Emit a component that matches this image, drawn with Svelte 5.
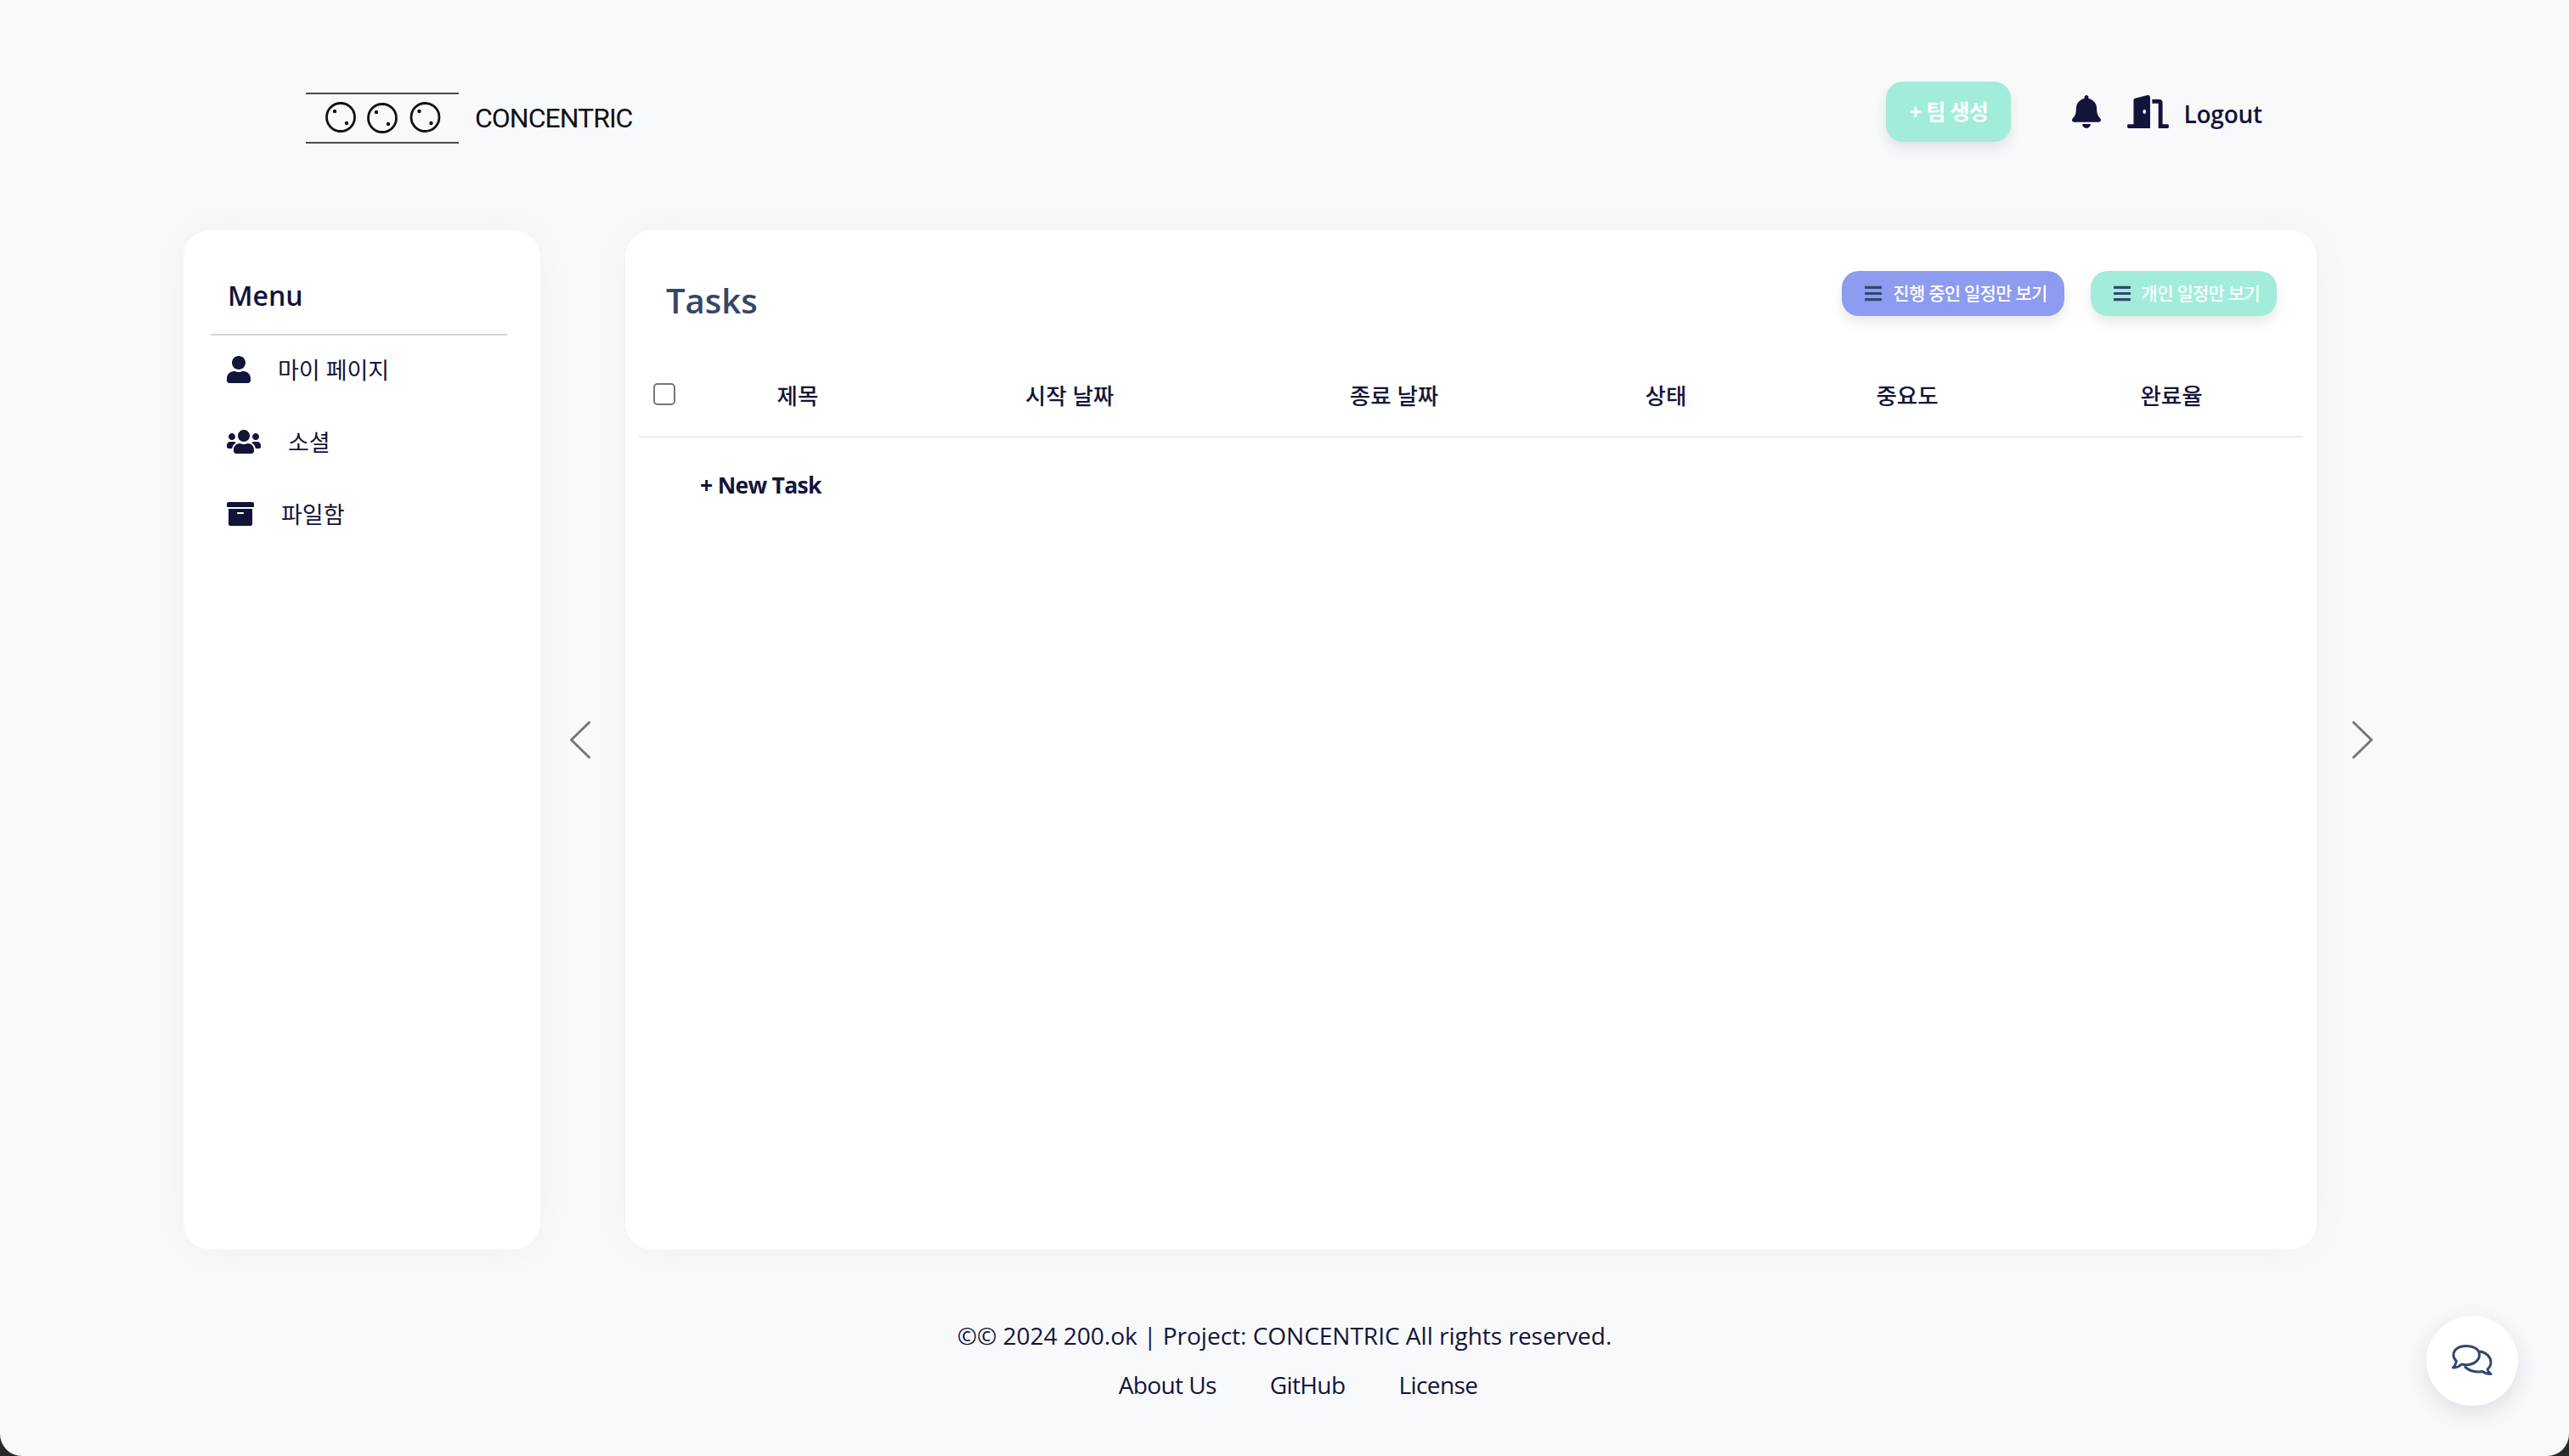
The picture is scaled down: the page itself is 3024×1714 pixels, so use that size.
<script>
  const menu = [
    { label: '마이 페이지', vb: '0 0 448 512', w: 28, d: 'M224 256c70.7 0 128-57.3 128-128S294.7 0 224 0 96 57.3 96 128s57.3 128 128 128zm89.6 32h-16.7c-22.2 10.2-46.9 16-72.9 16s-50.6-5.8-72.9-16h-16.7C60.2 288 0 348.2 0 422.4V464c0 26.5 21.5 48 48 48h352c26.5 0 48-21.5 48-48v-41.6c0-74.2-60.2-134.4-134.4-134.4z' },
    { label: '소셜', vb: '0 0 640 512', w: 40, d: 'M96 224c35.3 0 64-28.7 64-64s-28.7-64-64-64-64 28.7-64 64 28.7 64 64 64zm448 0c35.3 0 64-28.7 64-64s-28.7-64-64-64-64 28.7-64 64 28.7 64 64 64zm32 32h-64c-17.6 0-33.5 7.1-45.1 18.6 40.3 22.1 68.9 62 75.1 109.4h66c17.7 0 32-14.3 32-32v-32c0-35.3-28.7-64-64-64zm-256 0c61.9 0 112-50.1 112-112S381.9 32 320 32 208 82.1 208 144s50.1 112 112 112zm76.8 32h-8.3c-20.8 10-43.9 16-68.5 16s-47.6-6-68.5-16h-8.3C179.6 288 128 339.6 128 403.2V432c0 26.5 21.5 48 48 48h288c26.5 0 48-21.5 48-48v-28.8c0-63.6-51.6-115.2-115.2-115.2zm-223.7-13.4C161.5 263.1 145.6 256 128 256H64c-35.3 0-64 28.7-64 64v32c0 17.7 14.3 32 32 32h65.9c6.3-47.4 34.9-87.3 75.2-109.4z' },
    { label: '파일함', vb: '0 0 512 512', w: 32, d: 'M32 448c0 17.7 14.3 32 32 32h384c17.7 0 32-14.3 32-32V160H32v288zm160-212c0-6.6 5.4-12 12-12h104c6.6 0 12 5.4 12 12v8c0 6.6-5.4 12-12 12H204c-6.6 0-12-5.4-12-12v-8zM480 32H32C14.3 32 0 46.3 0 64v48c0 8.8 7.2 16 16 16h480c8.8 0 16-7.2 16-16V64c0-17.7-14.3-32-32-32z' }
  ];
  const bars = 'M16 132h416c8.837 0 16-7.163 16-16V76c0-8.837-7.163-16-16-16H16C7.163 60 0 67.163 0 76v40c0 8.837 7.163 16 16 16zm0 160h416c8.837 0 16-7.163 16-16v-40c0-8.837-7.163-16-16-16H16c-8.837 0-16 7.163-16 16v40c0 8.837 7.163 16 16 16zm0 160h416c8.837 0 16-7.163 16-16v-40c0-8.837-7.163-16-16-16H16c-8.837 0-16 7.163-16 16v40c0 8.837 7.163 16 16 16z';
  const cols = ['제목', '시작 날짜', '종료 날짜', '상태', '중요도', '완료율'];
  const circles = [
    { cx: 41, cy: 29, dx: 7 },
    { cx: 90, cy: 30, dx: 7 },
    { cx: 140.5, cy: 29, dx: 7 }
  ];
</script>

<div class="page">
  <header class="top">
    <div class="logo">
      <svg class="mark" width="180" height="60" viewBox="0 0 180 60" aria-hidden="true">
        <path d="M0 1H180M0 59H180" stroke="#111" stroke-width="1.6" fill="none" />
        {#each circles as c}
          <circle cx={c.cx} cy={c.cy} r="16.5" fill="none" stroke="#111" stroke-width="2.8" />
          <circle cx={c.cx - c.dx} cy={c.cy - c.dx} r="2.2" fill="#111" />
          <circle cx={c.cx + c.dx} cy={c.cy + c.dx} r="2.2" fill="#111" />
        {/each}
      </svg>
      <span class="wordmark">CONCENTRIC</span>
    </div>
    <div class="actions">
      <button class="team"><span>+ 팀 생성</span></button>
      <svg class="bell" viewBox="0 0 448 512" aria-hidden="true"><path d="M224 512c35.32 0 63.97-28.65 63.97-64H160.03c0 35.35 28.65 64 63.97 64zm215.39-149.71c-19.32-20.76-55.47-51.99-55.47-154.29 0-77.7-54.48-139.9-127.94-155.16V32c0-17.67-14.32-32-31.98-32s-31.98 14.33-31.98 32v20.84C118.56 68.1 64.08 130.3 64.08 208c0 102.3-36.15 133.53-55.47 154.29-6 6.45-8.66 14.16-8.61 21.71.11 16.4 12.98 32 32.1 32h383.8c19.12 0 32-15.6 32.1-32 .05-7.55-2.61-15.27-8.61-21.71z" /></svg>
      <svg class="door" viewBox="0 0 640 512" aria-hidden="true"><path d="M624 448h-80V113.45C544 86.19 522.47 64 496 64H384v64h96v384h144c8.84 0 16-7.16 16-16v-32c0-8.84-7.16-16-16-16zM312.24 1.01l-192 49.74C105.99 54.44 96 67.7 96 82.92V448H16c-8.84 0-16 7.16-16 16v32c0 8.84 7.16 16 16 16h336V33.18c0-21.58-19.56-37.41-39.76-32.17zM264 288c-13.25 0-24-14.33-24-32s10.75-32 24-32 24 14.33 24 32-10.75 32-24 32z" /></svg>
      <span class="logout">Logout</span>
    </div>
  </header>

  <div class="body">
    <aside class="side card">
      <h2 class="menu-title">Menu</h2>
      <ul class="menu">
        {#each menu as m}
          <li>
            <svg viewBox={m.vb} width={m.w} height="32" aria-hidden="true"><path d={m.d} /></svg>
            <span>{m.label}</span>
          </li>
        {/each}
      </ul>
    </aside>

    <div class="arrow-col left">
      <svg width="24" height="44" viewBox="0 0 24 44" aria-hidden="true"><path d="M22.5 1.5 1.5 22l21 20.5" /></svg>
    </div>

    <main class="tasks card">
      <div class="tasks-head">
        <h1>Tasks</h1>
        <div class="filters">
          <button class="filter purple">
            <svg viewBox="0 0 448 512" aria-hidden="true"><path d={bars} /></svg>
            <span>진행 중인 일정만 보기</span>
          </button>
          <button class="filter mint">
            <svg viewBox="0 0 448 512" aria-hidden="true"><path d={bars} /></svg>
            <span>개인 일정만 보기</span>
          </button>
        </div>
      </div>
      <div class="thead">
        <div class="check"><input type="checkbox" /></div>
        {#each cols as c}
          <div class="th">{c}</div>
        {/each}
      </div>
      <div class="new-task">+ New Task</div>
    </main>

    <div class="arrow-col right">
      <svg width="24" height="44" viewBox="0 0 24 44" aria-hidden="true"><path d="M1.5 1.5 22.5 22l-21 20.5" /></svg>
    </div>
  </div>

  <footer class="foot">
    <p>©© 2024 200.ok | Project: CONCENTRIC All rights reserved.</p>
    <nav>
      <span>About Us</span>
      <span>GitHub</span>
      <span>License</span>
    </nav>
  </footer>

  <button class="chat" aria-label="chat">
    <svg width="48" height="38" viewBox="0 0 48 38" fill="none" stroke="#34476f" stroke-width="3" stroke-linejoin="round" stroke-linecap="round" aria-hidden="true">
      <path d="M33 8c7.5 1 13 6.5 13 12.500 0 3.500-1.800 6.500-4 8.500 .5 2 2 4 4 5.500-4 0-7-1-10-3-1.500 .3-3 .4-4.500 .4-6 0-12-2-15.500-5.500" />
      <path d="M17 1.500C8 1.500 2 6 2 12c0 3 1.500 5.500 3.500 7.500C5 22 3.500 25 1.500 27 5.500 27 9 25.500 11.500 23c1.500 .5 3.500 .7 5.500 .7 9 0 15.500-5.200 15.500-11.700S26 1.500 17 1.500Z" />
    </svg>
  </button>
</div>

<style>
  :global(body) {
    margin: 0;
    background: #26282c;
  }
  .page {
    position: relative;
    box-sizing: border-box;
    height: 1714px;
    width: 3024px;
    background: #f8f9fb;
    border-radius: 0 0 26px 26px;
    overflow: hidden;
    color: #12143a;
    font-family: "Open Sans", "Noto Sans CJK KR", sans-serif;
  }
  .top {
    box-sizing: border-box;
    height: 271px;
    padding: 0 361px 9px 360px;
    display: flex;
    justify-content: space-between;
    align-items: center;
  }
  .logo {
    display: flex;
    align-items: center;
    gap: 19px;
    margin-top: 16px;
  }
  .mark { display: block; }
  .wordmark {
    font-family: Roboto, sans-serif;
    font-size: 32px;
    font-weight: 400;
    letter-spacing: -1px;
    color: #111;
    line-height: 1;
  }
  .actions {
    display: flex;
    align-items: center;
  }
  .team {
    width: 147px;
    height: 71px;
    border: 0;
    border-radius: 20px;
    background: #a2ecdc;
    color: #fff;
    font-family: "Open Sans", "Noto Sans CJK KR", sans-serif;
    font-size: 25px;
    font-weight: 700;
    letter-spacing: -0.6px;
    box-shadow: 0 8px 14px rgba(30, 40, 60, 0.1);
    padding: 0;
    margin-right: 72px;
  }
  .team span { display: block; margin-top: -2px; }
  .bell { width: 34px; height: 39px; fill: #12143a; margin-right: 31px; }
  .door { width: 49px; height: 39px; fill: #12143a; margin-right: 17px; }
  .logout { font-size: 28px; font-weight: 600; letter-spacing: -0.2px; line-height: 40px; margin-top: 6px; }

  .body {
    display: flex;
    height: 1200px;
    padding-left: 216px;
  }
  .card {
    background: #fff;
    border-radius: 32px;
    box-shadow: 0 0 48px rgba(20, 30, 60, 0.04);
  }
  .side {
    box-sizing: border-box;
    width: 420px;
    padding: 55px 39px 0 32px;
  }
  .menu-title {
    margin: 0;
    padding: 0 0 23px 20px;
    font-size: 32px;
    line-height: 44px;
    font-weight: 600;
    border-bottom: 2px solid #d4d4d8;
  }
  .menu {
    list-style: none;
    margin: -3px 0 0;
    padding: 0 0 0 19px;
  }
  .menu li {
    height: 85px;
    display: flex;
    align-items: center;
    gap: 32px;
    font-size: 27px;
  }
  .menu li svg { fill: #12143a; flex: none; }
  .arrow-col {
    display: flex;
    align-items: center;
  }
  .arrow-col path { fill: none; stroke: #777; stroke-width: 3; stroke-linecap: round; stroke-linejoin: round; }
  .arrow-col.left { width: 100px; padding-left: 35px; box-sizing: border-box; }
  .arrow-col.right { padding-left: 42px; }
  .tasks {
    box-sizing: border-box;
    width: 1991px;
    padding: 48px 16px 0;
  }
  .tasks-head {
    display: flex;
    justify-content: space-between;
    align-items: flex-start;
    padding: 0 31px 0 32px;
    height: 100px;
  }
  h1 {
    margin: 8px 0 0;
    font-size: 40px;
    line-height: 54px;
    font-weight: 600;
    color: #344767;
  }
  .filters { display: flex; gap: 31px; }
  .filter {
    display: flex;
    align-items: center;
    height: 53px;
    border: 0;
    border-radius: 20px;
    color: #fff;
    font-family: "Open Sans", "Noto Sans CJK KR", sans-serif;
    font-size: 21px;
    font-weight: 500;
    letter-spacing: -0.75px;
    box-shadow: 0 8px 14px rgba(30, 40, 60, 0.1);
    padding: 0 20px 0 27px;
    gap: 13px;
    white-space: nowrap;
  }
  .filter span { margin-top: -3px; }
  .filter svg { width: 20px; height: 23px; fill: #34476f; flex: none; }
  .purple { background: #8d9bf0; }
  .mint { background: #a2ecdc; }
  .thead {
    display: grid;
    grid-template-columns: 57px 260px 380px 384px 256px 312px 310px;
    height: 94px;
    align-items: center;
    border-bottom: 2px solid #ebebf0;
  }
  .check { padding-left: 17px; display: flex; align-items: center; margin-top: -4px; }
  .check input {
    appearance: none;
    box-sizing: border-box;
    width: 26px;
    height: 26px;
    margin: 0;
    background: #fff;
    border: 2px solid #767676;
    border-radius: 5px;
  }
  .th {
    text-align: center;
    font-size: 26.500px;
    font-weight: 500;
    margin-top: -3px;
  }
  .new-task {
    margin: 37px 0 0 72px;
    font-size: 26.500px;
    line-height: 38px;
    font-weight: 700;
    letter-spacing: -0.7px;
  }
  .foot {
    text-align: center;
    padding-top: 81px;
    font-size: 28px;
    line-height: 40px;
  }
  .foot p { margin: 0; }
  .foot nav {
    margin-top: 18px;
    display: flex;
    justify-content: center;
    gap: 63px;
    padding-left: 32px;
    letter-spacing: -0.6px;
  }
  .chat {
    position: absolute;
    left: 2856px;
    top: 1549px;
    width: 108px;
    height: 106px;
    border: 0;
    padding: 0;
    border-radius: 50%;
    background: #fff;
    box-shadow: 0 8px 26px rgba(20, 30, 60, 0.12);
    display: flex;
    align-items: center;
    justify-content: center;
  }
</style>
